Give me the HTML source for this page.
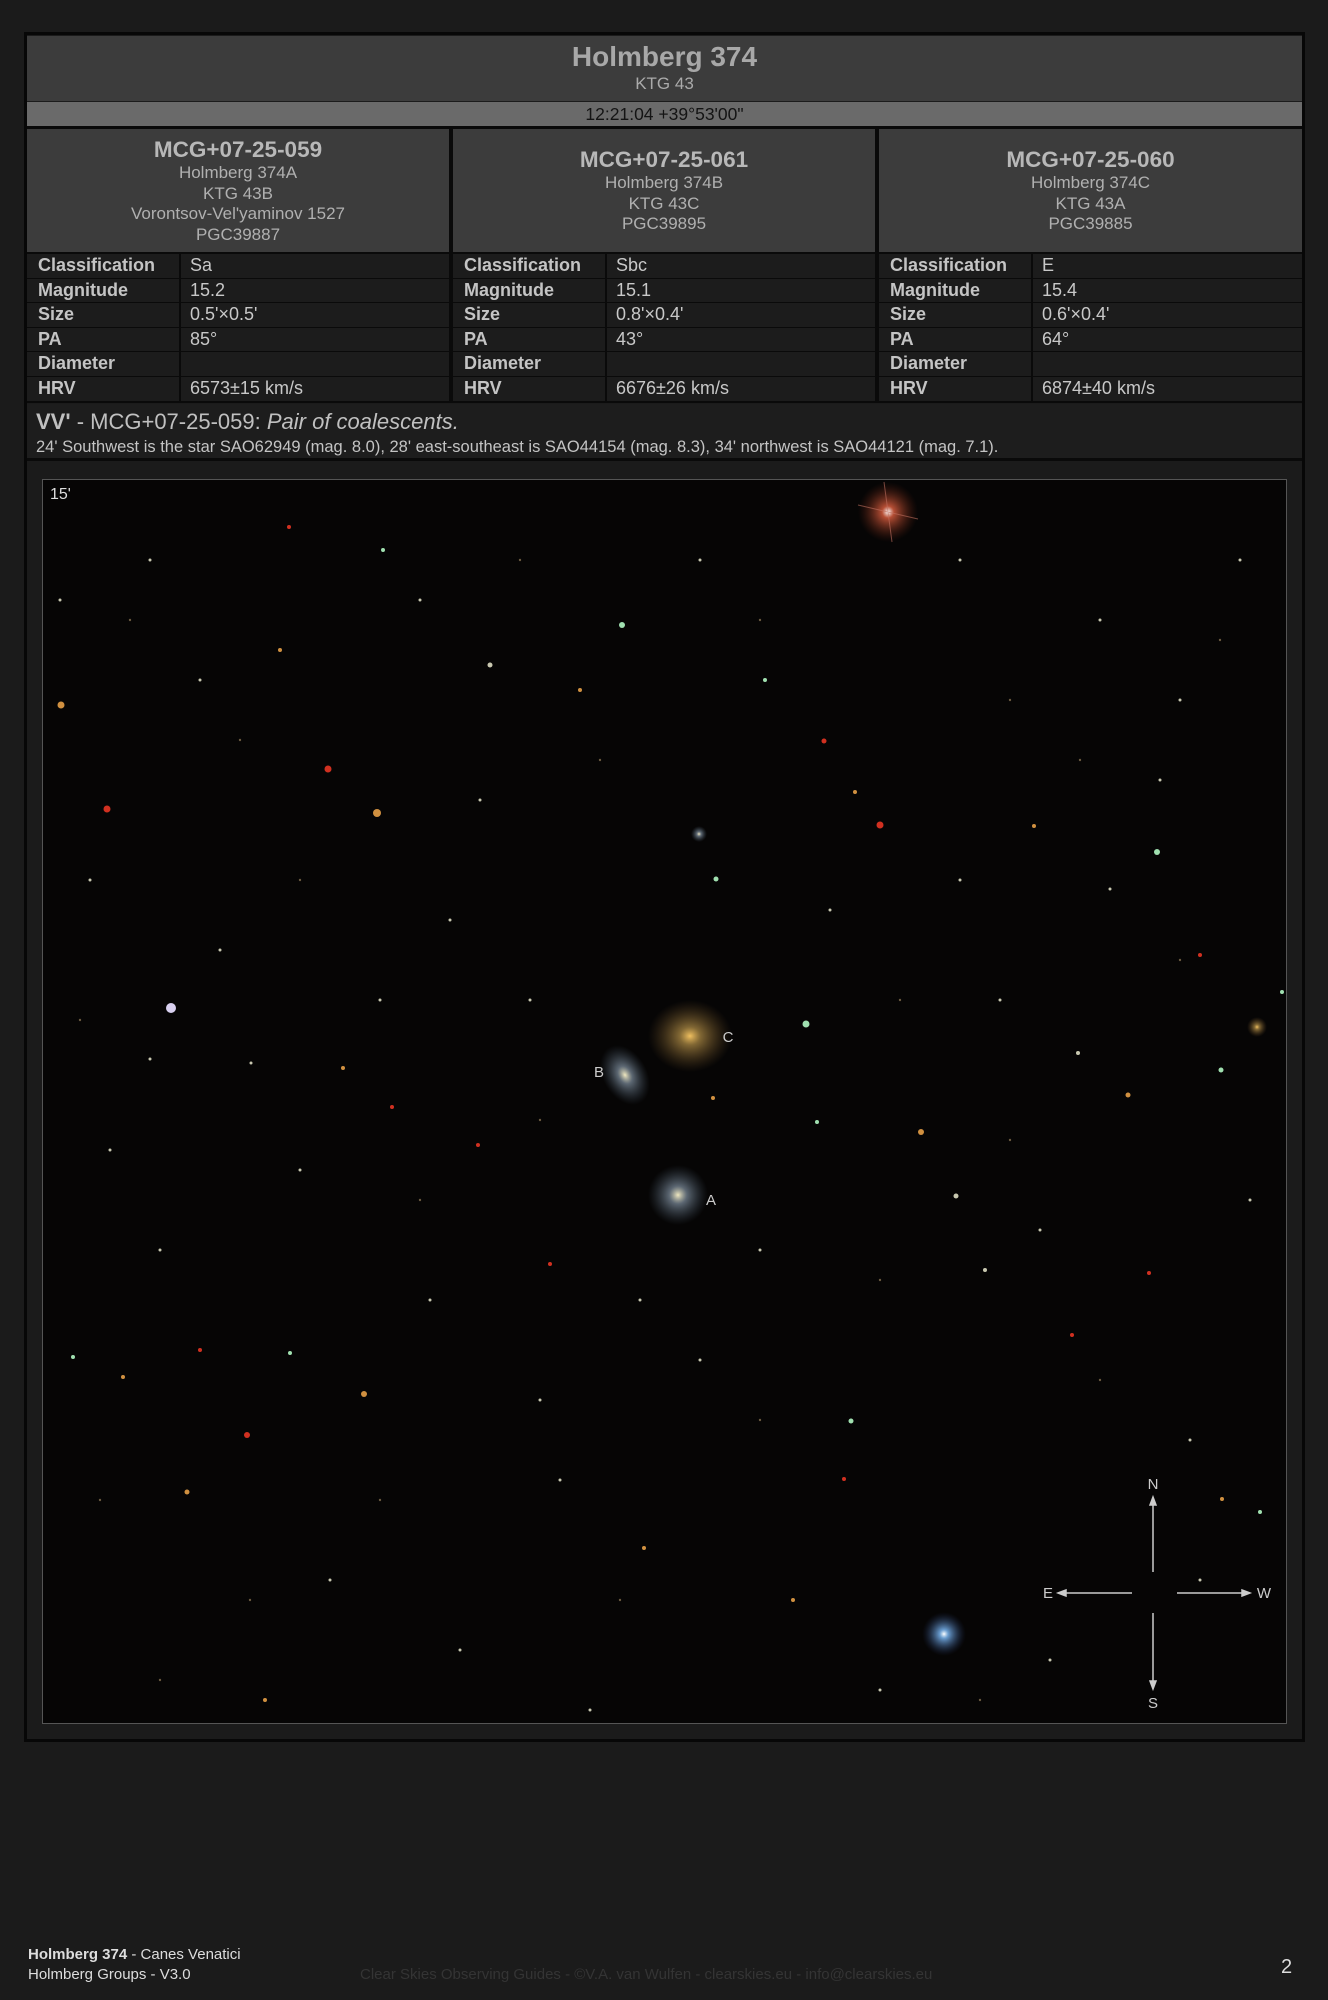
<!DOCTYPE html>
<html><head><meta charset="utf-8"><style>
*{margin:0;padding:0;box-sizing:border-box}
body{width:1328px;height:2000px;background:#1b1b1b;font-family:"Liberation Sans",Arial,sans-serif;position:relative;overflow:hidden;color:#c8c8c8}
.a{position:absolute}
#box{left:24px;top:32px;width:1281px;height:1710px;background:#1b1b1b;border:3px solid #070707}
.hdr{background:#3c3c3c;text-align:center;color:#b0b0b0}
.ch{top:129px;height:123px;font-size:17px;line-height:20.5px;padding-top:8px}
.ch b{font-size:22.5px;line-height:26px;display:block;color:#b8b8b8}
.row{height:23.5px;background:#1c1c1c;font-size:18px;line-height:23px;color:#c8c8c8}
.row .l{position:absolute;left:11px;font-weight:bold;color:#c4c4c4}
.row .v{position:absolute;left:163px}
.row .d{position:absolute;left:152px;top:0;width:2px;height:100%;background:#0a0a0a}
</style></head><body>
<div id="box" class="a"></div>
<div class="a hdr" style="left:27px;top:36px;width:1275px;height:65px">
 <div style="font-size:28px;font-weight:bold;padding-top:5px;line-height:32px;color:#a8a8a8">Holmberg 374</div>
 <div style="font-size:17px;line-height:22px;color:#aaa">KTG 43</div>
</div>
<div class="a" style="left:27px;top:102px;width:1275px;height:24px;background:#6a6a6a;text-align:center;font-size:17.5px;line-height:24px;color:#141414">12:21:04 +39°53'00"</div>
<div class="a" style="left:27px;top:126px;width:1275px;height:277px;background:#0a0a0a"></div>
<div class="a hdr ch" style="left:27px;width:422px"><b>MCG+07-25-059</b>Holmberg 374A<br>KTG 43B<br>Vorontsov-Vel'yaminov 1527<br>PGC39887</div>
<div class="a hdr ch" style="left:453px;width:422px;padding-top:18px"><b>MCG+07-25-061</b>Holmberg 374B<br>KTG 43C<br>PGC39895</div>
<div class="a hdr ch" style="left:879px;width:423px;padding-top:18px"><b>MCG+07-25-060</b>Holmberg 374C<br>KTG 43A<br>PGC39885</div>

<div class="a" style="left:27px;top:254px;width:422px">
<div class="row a" style="top:0;width:422px"><span class="l">Classification</span><span class="d"></span><span class="v">Sa</span></div>
<div class="row a" style="top:24.6px;width:422px"><span class="l">Magnitude</span><span class="d"></span><span class="v">15.2</span></div>
<div class="row a" style="top:49.2px;width:422px"><span class="l">Size</span><span class="d"></span><span class="v">0.5'×0.5'</span></div>
<div class="row a" style="top:73.8px;width:422px"><span class="l">PA</span><span class="d"></span><span class="v">85°</span></div>
<div class="row a" style="top:98.4px;width:422px"><span class="l">Diameter</span><span class="d"></span><span class="v"></span></div>
<div class="row a" style="top:123px;width:422px"><span class="l">HRV</span><span class="d"></span><span class="v">6573±15 km/s</span></div>
</div>
<div class="a" style="left:453px;top:254px;width:422px">
<div class="row a" style="top:0;width:422px"><span class="l">Classification</span><span class="d"></span><span class="v">Sbc</span></div>
<div class="row a" style="top:24.6px;width:422px"><span class="l">Magnitude</span><span class="d"></span><span class="v">15.1</span></div>
<div class="row a" style="top:49.2px;width:422px"><span class="l">Size</span><span class="d"></span><span class="v">0.8'×0.4'</span></div>
<div class="row a" style="top:73.8px;width:422px"><span class="l">PA</span><span class="d"></span><span class="v">43°</span></div>
<div class="row a" style="top:98.4px;width:422px"><span class="l">Diameter</span><span class="d"></span><span class="v"></span></div>
<div class="row a" style="top:123px;width:422px"><span class="l">HRV</span><span class="d"></span><span class="v">6676±26 km/s</span></div>
</div>
<div class="a" style="left:879px;top:254px;width:423px">
<div class="row a" style="top:0;width:423px"><span class="l">Classification</span><span class="d"></span><span class="v">E</span></div>
<div class="row a" style="top:24.6px;width:423px"><span class="l">Magnitude</span><span class="d"></span><span class="v">15.4</span></div>
<div class="row a" style="top:49.2px;width:423px"><span class="l">Size</span><span class="d"></span><span class="v">0.6'×0.4'</span></div>
<div class="row a" style="top:73.8px;width:423px"><span class="l">PA</span><span class="d"></span><span class="v">64°</span></div>
<div class="row a" style="top:98.4px;width:423px"><span class="l">Diameter</span><span class="d"></span><span class="v"></span></div>
<div class="row a" style="top:123px;width:423px"><span class="l">HRV</span><span class="d"></span><span class="v">6874±40 km/s</span></div>
</div>

<div class="a" style="left:27px;top:404px;width:1275px;height:57px;background:#1d1d1d;border-bottom:3px solid #0a0a0a">
 <div class="a" style="left:9px;top:5px;font-size:22px;color:#c0c0c0;white-space:nowrap"><b>VV'</b> - MCG+07-25-059: <i>Pair of coalescents.</i></div>
 <div class="a" style="left:9px;top:34px;font-size:16.5px;color:#c4c4c4;white-space:nowrap">24' Southwest is the star SAO62949 (mag. 8.0), 28' east-southeast is SAO44154 (mag. 8.3), 34' northwest is SAO44121 (mag. 7.1).</div>
</div>

<svg class="a" style="left:42px;top:479px" width="1245" height="1245" viewBox="42 479 1245 1245">
<defs>
<radialGradient id="gc"><stop offset="0" stop-color="#f0c060"/><stop offset=".25" stop-color="#a08040" stop-opacity=".8"/><stop offset="1" stop-color="#5a4020" stop-opacity="0"/></radialGradient>
<radialGradient id="gs"><stop offset="0" stop-color="#f0e8c0"/><stop offset=".3" stop-color="#8090a0" stop-opacity=".7"/><stop offset="1" stop-color="#405060" stop-opacity="0"/></radialGradient>
<radialGradient id="rs"><stop offset="0" stop-color="#fff"/><stop offset=".2" stop-color="#e06040" stop-opacity=".8"/><stop offset="1" stop-color="#602010" stop-opacity="0"/></radialGradient>
<radialGradient id="bs"><stop offset="0" stop-color="#fff"/><stop offset=".2" stop-color="#80c0ff" stop-opacity=".8"/><stop offset="1" stop-color="#203060" stop-opacity="0"/></radialGradient>
</defs>
<rect x="42" y="479" width="1245" height="1245" fill="#060505" stroke="#555" stroke-width="2"/>
<circle cx="888" cy="512" r="30" fill="url(#rs)"/>
<path d="M858 505 L918 519 M884 482 L892 542" stroke="#c07060" stroke-width="1" opacity=".6"/>
<circle cx="944" cy="1634" r="22" fill="url(#bs)"/>
<ellipse cx="690" cy="1036" rx="42" ry="36" fill="url(#gc)"/>
<ellipse cx="625" cy="1075" rx="22" ry="32" fill="url(#gs)" transform="rotate(-30 625 1075)"/>
<circle cx="678" cy="1195" r="30" fill="url(#gs)"/>
<circle cx="1257" cy="1027" r="10" fill="url(#gc)"/>
<circle cx="171" cy="1008" r="5" fill="#d8d0f0"/>
<circle cx="699" cy="834" r="8" fill="url(#gs)"/>
<g fill="#d03020">
<circle cx="328" cy="769" r="3.5"/><circle cx="107" cy="809" r="3.5"/><circle cx="880" cy="825" r="3.5"/><circle cx="824" cy="741" r="2.5"/><circle cx="247" cy="1435" r="3"/><circle cx="289" cy="527" r="2"/><circle cx="478" cy="1145" r="2"/><circle cx="392" cy="1107" r="2"/><circle cx="1072" cy="1335" r="2"/><circle cx="844" cy="1479" r="2"/><circle cx="550" cy="1264" r="2"/><circle cx="1149" cy="1273" r="2"/><circle cx="200" cy="1350" r="2"/><circle cx="1200" cy="955" r="2"/></g>
<g fill="#d09040">
<circle cx="61" cy="705" r="3.5"/><circle cx="921" cy="1132" r="3"/><circle cx="364" cy="1394" r="3"/><circle cx="580" cy="690" r="2"/><circle cx="1128" cy="1095" r="2.5"/><circle cx="280" cy="650" r="2"/><circle cx="343" cy="1068" r="2"/><circle cx="187" cy="1492" r="2.5"/><circle cx="1222" cy="1499" r="2"/><circle cx="644" cy="1548" r="2"/><circle cx="377" cy="813" r="4"/><circle cx="855" cy="792" r="2"/><circle cx="123" cy="1377" r="2"/><circle cx="1034" cy="826" r="2"/><circle cx="713" cy="1098" r="2"/><circle cx="265" cy="1700" r="2"/><circle cx="793" cy="1600" r="2"/></g>
<g fill="#a0e0b0">
<circle cx="806" cy="1024" r="3.5"/><circle cx="1157" cy="852" r="3"/><circle cx="851" cy="1421" r="2.5"/><circle cx="716" cy="879" r="2.5"/><circle cx="765" cy="680" r="2"/><circle cx="1221" cy="1070" r="2.5"/><circle cx="1282" cy="992" r="2"/><circle cx="817" cy="1122" r="2"/><circle cx="73" cy="1357" r="2"/><circle cx="290" cy="1353" r="2"/><circle cx="622" cy="625" r="3"/><circle cx="1260" cy="1512" r="2"/><circle cx="383" cy="550" r="2"/></g>
<g fill="#c8c8b0">
<circle cx="490" cy="665" r="2.5"/><circle cx="150" cy="1059" r="1.5"/><circle cx="251" cy="1063" r="1.5"/><circle cx="1078" cy="1053" r="2"/><circle cx="1110" cy="889" r="1.5"/><circle cx="956" cy="1196" r="2.5"/><circle cx="985" cy="1270" r="2"/><circle cx="1190" cy="1440" r="1.5"/><circle cx="300" cy="1170" r="1.5"/><circle cx="160" cy="1250" r="1.5"/><circle cx="430" cy="1300" r="1.5"/><circle cx="560" cy="1480" r="1.5"/><circle cx="700" cy="1360" r="1.5"/><circle cx="1000" cy="1000" r="1.5"/><circle cx="1180" cy="700" r="1.5"/><circle cx="1100" cy="620" r="1.5"/><circle cx="960" cy="560" r="1.5"/><circle cx="450" cy="920" r="1.5"/><circle cx="220" cy="950" r="1.5"/><circle cx="90" cy="880" r="1.5"/><circle cx="110" cy="1150" r="1.5"/><circle cx="330" cy="1580" r="1.5"/><circle cx="460" cy="1650" r="1.5"/><circle cx="590" cy="1710" r="1.5"/><circle cx="880" cy="1690" r="1.5"/><circle cx="1050" cy="1660" r="1.5"/><circle cx="1200" cy="1580" r="1.5"/><circle cx="1250" cy="1200" r="1.5"/><circle cx="1040" cy="1230" r="1.5"/><circle cx="760" cy="1250" r="1.5"/><circle cx="640" cy="1300" r="1.5"/><circle cx="530" cy="1000" r="1.5"/><circle cx="380" cy="1000" r="1.5"/><circle cx="830" cy="910" r="1.5"/><circle cx="960" cy="880" r="1.5"/><circle cx="60" cy="600" r="1.5"/><circle cx="150" cy="560" r="1.5"/><circle cx="420" cy="600" r="1.5"/><circle cx="700" cy="560" r="1.5"/><circle cx="1240" cy="560" r="1.5"/><circle cx="1160" cy="780" r="1.5"/><circle cx="540" cy="1400" r="1.5"/><circle cx="480" cy="800" r="1.5"/><circle cx="200" cy="680" r="1.5"/></g>
<g fill="#6a5a40">
<circle cx="130" cy="620" r="1.2"/><circle cx="240" cy="740" r="1.2"/><circle cx="520" cy="560" r="1.2"/><circle cx="600" cy="760" r="1.2"/><circle cx="760" cy="620" r="1.2"/><circle cx="1010" cy="700" r="1.2"/><circle cx="1080" cy="760" r="1.2"/><circle cx="1220" cy="640" r="1.2"/><circle cx="1180" cy="960" r="1.2"/><circle cx="1010" cy="1140" r="1.2"/><circle cx="880" cy="1280" r="1.2"/><circle cx="760" cy="1420" r="1.2"/><circle cx="620" cy="1600" r="1.2"/><circle cx="380" cy="1500" r="1.2"/><circle cx="250" cy="1600" r="1.2"/><circle cx="100" cy="1500" r="1.2"/><circle cx="80" cy="1020" r="1.2"/><circle cx="300" cy="880" r="1.2"/><circle cx="420" cy="1200" r="1.2"/><circle cx="540" cy="1120" r="1.2"/><circle cx="900" cy="1000" r="1.2"/><circle cx="1100" cy="1380" r="1.2"/><circle cx="980" cy="1700" r="1.2"/><circle cx="160" cy="1680" r="1.2"/></g>
<text x="50" y="499" font-family="Liberation Sans" font-size="16" fill="#ddd">15'</text>
<g font-family="Liberation Sans" font-size="15" fill="#ccc" text-anchor="middle">
<text x="728" y="1042">C</text><text x="599" y="1077">B</text><text x="711" y="1205">A</text>
<text x="1153" y="1489">N</text><text x="1153" y="1708">S</text><text x="1048" y="1598">E</text><text x="1264" y="1598">W</text></g>
<g stroke="#ccc" stroke-width="1.5" fill="#ccc">
<line x1="1153" y1="1572" x2="1153" y2="1502"/><path d="M1153 1497 l-3 8 h6z"/>
<line x1="1153" y1="1613" x2="1153" y2="1685"/><path d="M1153 1689 l-3 -8 h6z"/>
<line x1="1132" y1="1593" x2="1062" y2="1593"/><path d="M1058 1593 l8 -3 v6z"/>
<line x1="1177" y1="1593" x2="1246" y2="1593"/><path d="M1250 1593 l-8 -3 v6z"/></g>
</svg>

<div class="a" style="left:28px;top:1946px;font-family:'Liberation Sans Narrow','Liberation Sans',sans-serif;font-size:15px;color:#ddd;white-space:nowrap"><b>Holmberg 374</b> - Canes Venatici</div>
<div class="a" style="left:28px;top:1966px;font-family:'Liberation Sans Narrow','Liberation Sans',sans-serif;font-size:15px;color:#ddd;white-space:nowrap">Holmberg Groups - V3.0</div>
<div class="a" style="left:360px;top:1966px;width:608px;font-family:'Liberation Sans Narrow','Liberation Sans',sans-serif;font-size:15px;color:#343434;white-space:nowrap">Clear Skies Observing Guides - ©V.A. van Wulfen - clearskies.eu - info@clearskies.eu</div>
<div class="a" style="left:1281px;top:1956px;font-size:20px;color:#ddd">2</div>
</body></html>
